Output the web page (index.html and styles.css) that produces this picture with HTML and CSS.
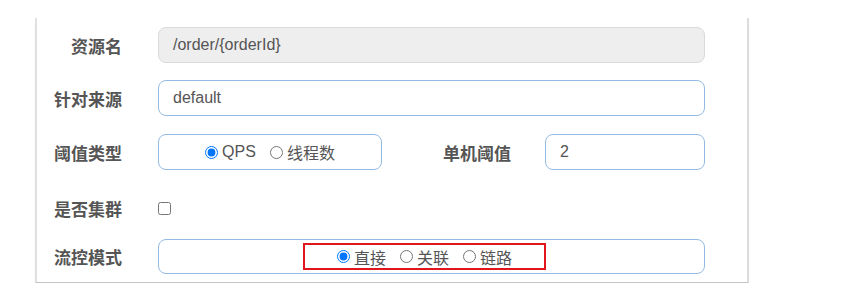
FILE: index.html
```html
<!DOCTYPE html>
<html lang="zh-CN">
<head>
    <meta charset="UTF-8">
    <title>流控规则</title>
    <link rel="stylesheet" href="styles.css">
</head>
<body>
    <div class="panel">
        <div class="row row-1">
            <label class="label">资源名</label>
            <div class="field disabled">/order/{orderId}</div>
        </div>

        <div class="row row-2">
            <label class="label">针对来源</label>
            <div class="field">default</div>
        </div>

        <div class="row row-3">
            <label class="label">阈值类型</label>
            <div class="field radio-box small">
                <label class="opt"><input type="radio" name="grade" checked> QPS</label>
                <label class="opt"><input type="radio" name="grade"> 线程数</label>
            </div>
            <label class="label label-2">单机阈值</label>
            <div class="field count">2</div>
        </div>

        <div class="row row-4">
            <label class="label">是否集群</label>
            <input type="checkbox" class="check">
        </div>

        <div class="row row-5">
            <label class="label">流控模式</label>
            <div class="field radio-box">
                <div class="highlight">
                    <label class="opt"><input type="radio" name="strategy" checked> 直接</label>
                    <label class="opt"><input type="radio" name="strategy"> 关联</label>
                    <label class="opt"><input type="radio" name="strategy"> 链路</label>
                </div>
            </div>
        </div>
    </div>
</body>
</html>
```

FILE: styles.css
```css
* {
    margin: 0;
    padding: 0;
    box-sizing: border-box;
}

body {
    font-family: "Liberation Sans", "Noto Sans CJK SC", sans-serif;
    background-color: #fff;
    color: #555;
}

.panel {
    margin: 18px 0 0 35px;
    width: 714px;
    padding: 9px 42px 8px 0;
    background-color: #fff;
    border-left: 2px solid #e0e0e0;
    border-right: 2px solid #dcdcdc;
    border-bottom: 1px solid #c4c4c4;
    box-shadow: 0 4px 3px -2px rgba(0, 0, 0, 0.3);
}

.row {
    display: flex;
    align-items: center;
}

.row-1 { margin-bottom: 17px; }
.row-2 { margin-bottom: 18px; }
.row-3 { margin-bottom: 20px; }
.row-4 { height: 36px; margin-bottom: 13px; }

.label {
    width: 85px;
    margin-right: 36px;
    text-align: right;
    font-size: 17px;
    font-weight: bold;
    color: #555;
}

.label-2 {
    width: 129px;
    margin-right: 34px;
}

.field {
    flex: 1;
    height: 36px;
    padding: 0 14px;
    display: flex;
    align-items: center;
    border: 1.5px solid #93bbe3;
    border-radius: 8px;
    font-size: 16px;
    color: #555;
}

.field.disabled {
    background-color: #eee;
    border-color: #dadada;
}

.field.small {
    flex: 0 0 224px;
}

.field.count {
    flex: 0 0 160px;
}

.radio-box {
    justify-content: center;
}

.row-5 .field {
    height: 35px;
    padding: 0;
}

.opt {
    display: flex;
    align-items: center;
    font-size: 16px;
    color: #555;
    margin: 0 7px;
}

.opt input {
    width: 13px;
    height: 13px;
    margin: 0 4px 0 0;
}

.highlight {
    display: flex;
    align-items: center;
    justify-content: center;
    width: 243px;
    height: 27px;
    margin-left: -14px;
    border: 2px solid #e0161c;
}

.check {
    width: 13px;
    height: 13px;
    margin: 0;
}
```
